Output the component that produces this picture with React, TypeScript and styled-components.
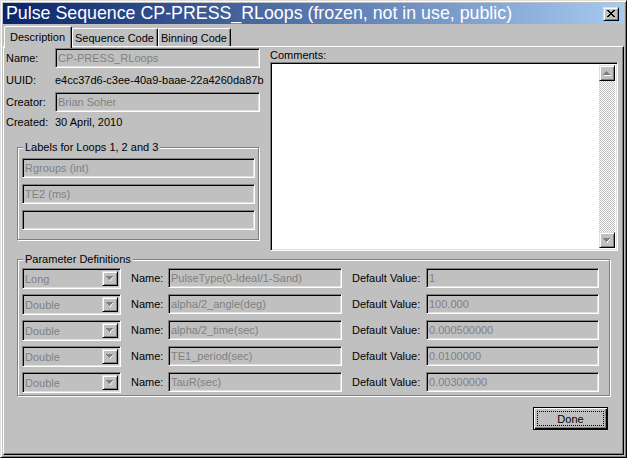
import React from 'react';
import styled, { createGlobalStyle, css } from 'styled-components';

const Global = createGlobalStyle`
  html, body { margin: 0; padding: 0; background: #c0c0c0; }
  body { font-family: 'Liberation Sans', Arial, sans-serif; font-size: 11px; color: #000; }
  * { box-sizing: border-box; }
`;

const raised = css`
  border: 1px solid;
  border-color: #dfdfdf #000 #000 #dfdfdf;
  box-shadow: inset 1px 1px #fff, inset -1px -1px #808080;
  background: #c0c0c0;
`;

const sunken = css`
  border: 1px solid;
  border-color: #808080 #fff #fff #808080;
  box-shadow: inset 1px 1px #000, inset -1px -1px #dfdfdf;
`;

const Window = styled.div`
  width: 627px;
  height: 458px;
  background: #c0c0c0;
  border: 1px solid;
  border-color: #dfdfdf #000 #000 #dfdfdf;
  box-shadow: inset 1px 1px #fff, inset -1px -1px #808080;
  padding: 2px;
  display: flex;
  flex-direction: column;
`;

const TitleBar = styled.div`
  height: 21px;
  flex: none;
  display: flex;
  align-items: center;
  justify-content: space-between;
  padding: 0 5px 0 3px;
  background: linear-gradient(90deg, #0a246a 0%, #a6caf0 100%);
  color: #fff;
  font-size: 17.8px;
  white-space: nowrap;
`;

const CloseButton = styled.div`
  ${raised};
  width: 16px;
  height: 14px;
  display: flex;
  align-items: center;
  justify-content: center;
`;

const TabStrip = styled.div`
  height: 22px;
  flex: none;
  display: flex;
  align-items: flex-end;
  padding-left: 3px;
`;

const Tab = styled.div<{ $active?: boolean }>`
  position: relative;
  height: ${(p) => (p.$active ? '22px' : '18px')};
  margin: ${(p) => (p.$active ? '0 0 -2px -2px' : '0')};
  padding: ${(p) => (p.$active ? '0 6px 2px 5px' : '0 3px 0 2px')};
  z-index: ${(p) => (p.$active ? 2 : 1)};
  display: flex;
  align-items: center;
  background: #c0c0c0;
  border-top: 1px solid #fff;
  border-left: 1px solid #fff;
  border-right: 1px solid #000;
  box-shadow: inset -1px 0 #808080;
  border-radius: 2px 2px 0 0;
`;

const Panel = styled.div`
  position: relative;
  z-index: 1;
  flex: 1;
  border: 1px solid;
  border-color: #fff #000 #000 #fff;
  box-shadow: inset -1px -1px #808080;
  padding: 1px 4px 0 2px;
  display: flex;
  flex-direction: column;
`;

const TopSection = styled.div`
  display: grid;
  grid-template-columns: 254px 348px;
  column-gap: 10px;
  align-items: start;
`;

const Column = styled.div`
  display: flex;
  flex-direction: column;
`;

const FieldRow = styled.div<{ $h?: number }>`
  display: flex;
  align-items: center;
  height: ${(p) => p.$h ?? 20}px;
`;

const Label = styled.span<{ $w?: number }>`
  flex: none;
  width: ${(p) => (p.$w ? `${p.$w}px` : 'auto')};
  white-space: nowrap;
`;

const Value = styled.span`
  white-space: nowrap;
`;

const TextField = styled.input`
  ${sunken};
  appearance: none;
  flex: 1 1 auto;
  min-width: 0;
  width: 100%;
  height: 20px;
  margin: 0;
  padding: 0 0 0 2px;
  background: #c0c0c0;
  color: #808080;
  font: inherit;
  outline: none;
`;

const Group = styled.div`
  position: relative;
  border: 1px solid #808080;
  box-shadow: inset 1px 1px #fff, 1px 1px #fff;
`;

const LabelsGroup = styled(Group)`
  margin: 15px 1px 0 11px;
  padding: 10px 3px 9px 4px;
  display: flex;
  flex-direction: column;
  gap: 6px;
`;

const Legend = styled.span`
  position: absolute;
  top: -7px;
  left: 5px;
  padding: 0 2px;
  line-height: 13px;
  background: #c0c0c0;
  white-space: nowrap;
`;

const CommentsLabel = styled.div`
  height: 14px;
  line-height: 14px;
`;

const CommentsBox = styled.div`
  ${sunken};
  height: 189px;
  background: #fff;
  padding: 2px;
  display: flex;
  justify-content: flex-end;
`;

const ScrollBar = styled.div`
  width: 16px;
  display: flex;
  flex-direction: column;
`;

const ScrollButton = styled.div`
  ${raised};
  width: 16px;
  height: 16px;
  flex: none;
  display: flex;
  align-items: center;
  justify-content: center;
`;

const ScrollTrack = styled.div`
  flex: 1;
  background: repeating-conic-gradient(#fff 0 25%, #c0c0c0 0 50%) 0 0 / 2px 2px;
`;

const ParamGroup = styled(Group)`
  margin: 8px 0 0 11px;
  width: 593px;
  padding: 8px 0 2px 4px;
  display: flex;
  flex-direction: column;
  gap: 5px;
`;

const ParamRow = styled.div`
  display: grid;
  grid-template-columns: 99px 47px 174px 84px 173px;
  height: 21px;
  align-items: start;
`;

const ParamLabel = styled.span`
  padding-left: 10px;
  line-height: 20px;
  white-space: nowrap;
`;

const Combo = styled.div`
  ${sunken};
  height: 21px;
  padding: 2px;
  display: flex;
  align-items: stretch;
  background: #c0c0c0;
`;

const ComboText = styled.span`
  flex: 1;
  color: #808080;
  line-height: 17px;
`;

const ComboButton = styled.div`
  ${raised};
  width: 16px;
  display: flex;
  align-items: center;
  justify-content: center;
`;

const Footer = styled.div`
  display: flex;
  justify-content: flex-end;
  margin-top: 11px;
  padding-right: 11px;
`;

const DoneButton = styled.div`
  position: relative;
  width: 75px;
  height: 23px;
  border: 1px solid #000;
  box-shadow: inset 1px 1px #fff, inset -1px -1px #000, inset -2px -2px #808080;
  display: flex;
  align-items: center;
  justify-content: center;
  &::after {
    content: '';
    position: absolute;
    inset: 3px;
    border: 1px dotted #000;
  }
`;

const Arrow = ({ up }: { up?: boolean }) => (
  <svg width="8" height="5" viewBox="0 0 8 5" shapeRendering="crispEdges">
    {up ? (
      <>
        <path d="M1 4h7v1H1z M2 3h5v1H2z" fill="#fff" />
        <path d="M3 0h1v1H3z M2 1h3v1H2z M1 2h5v1H1z M0 3h7v1H0z" fill="#808080" />
      </>
    ) : (
      <>
        <path d="M4 4h1v1H4z M6 1h1v1H6z M5 2h1v1H5z M4 3h1v1H4z" fill="#fff" />
        <path d="M0 0h7v1H0z M1 1h5v1H1z M2 2h3v1H2z M3 3h1v1H3z" fill="#808080" />
      </>
    )}
  </svg>
);

const CloseGlyph = () => (
  <svg width="8" height="7" viewBox="0 0 8 7" shapeRendering="crispEdges">
    <path
      d="M0 0h2v1H0z M6 0h2v1H6z M1 1h2v1H1z M5 1h2v1H5z M2 2h4v1H2z M3 3h2v1H3z M2 4h4v1H2z M1 5h2v1H1z M5 5h2v1H5z M0 6h2v1H0z M6 6h2v1H6z"
      fill="#000"
    />
  </svg>
);

const params = [
  { type: 'Long', name: 'PulseType(0-Ideal/1-Sand)', value: '1' },
  { type: 'Double', name: 'alpha/2_angle(deg)', value: '100.000' },
  { type: 'Double', name: 'alpha/2_time(sec)', value: '0.000500000' },
  { type: 'Double', name: 'TE1_period(sec)', value: '0.0100000' },
  { type: 'Double', name: 'TauR(sec)', value: '0.00300000' },
];

export default function App() {
  return (
    <>
      <Global />
      <Window>
        <TitleBar>
          <span>Pulse Sequence CP-PRESS_RLoops (frozen, not in use, public)</span>
          <CloseButton>
            <CloseGlyph />
          </CloseButton>
        </TitleBar>
        <TabStrip>
          <Tab $active>Description</Tab>
          <Tab>Sequence Code</Tab>
          <Tab>Binning Code</Tab>
        </TabStrip>
        <Panel>
          <TopSection>
            <Column>
              <FieldRow>
                <Label $w={49}>Name:</Label>
                <TextField readOnly value="CP-PRESS_RLoops" />
              </FieldRow>
              <FieldRow $h={24}>
                <Label $w={49}>UUID:</Label>
                <Value>e4cc37d6-c3ee-40a9-baae-22a4260da87b</Value>
              </FieldRow>
              <FieldRow>
                <Label $w={49}>Creator:</Label>
                <TextField readOnly value="Brian Soher" />
              </FieldRow>
              <FieldRow>
                <Label $w={49}>Created:</Label>
                <Value>30 April, 2010</Value>
              </FieldRow>
              <LabelsGroup>
                <Legend>Labels for Loops 1, 2 and 3</Legend>
                <TextField readOnly value="Rgroups (int)" />
                <TextField readOnly value="TE2 (ms)" />
                <TextField readOnly value="" />
              </LabelsGroup>
            </Column>
            <Column>
              <CommentsLabel>Comments:</CommentsLabel>
              <CommentsBox>
                <ScrollBar>
                  <ScrollButton>
                    <Arrow up />
                  </ScrollButton>
                  <ScrollTrack />
                  <ScrollButton>
                    <Arrow />
                  </ScrollButton>
                </ScrollBar>
              </CommentsBox>
            </Column>
          </TopSection>
          <ParamGroup>
            <Legend>Parameter Definitions</Legend>
            {params.map((p, i) => (
              <ParamRow key={i}>
                <Combo>
                  <ComboText>{p.type}</ComboText>
                  <ComboButton>
                    <Arrow />
                  </ComboButton>
                </Combo>
                <ParamLabel>Name:</ParamLabel>
                <TextField readOnly value={p.name} />
                <ParamLabel>Default Value:</ParamLabel>
                <TextField readOnly value={p.value} />
              </ParamRow>
            ))}
          </ParamGroup>
          <Footer>
            <DoneButton>Done</DoneButton>
          </Footer>
        </Panel>
      </Window>
    </>
  );
}
